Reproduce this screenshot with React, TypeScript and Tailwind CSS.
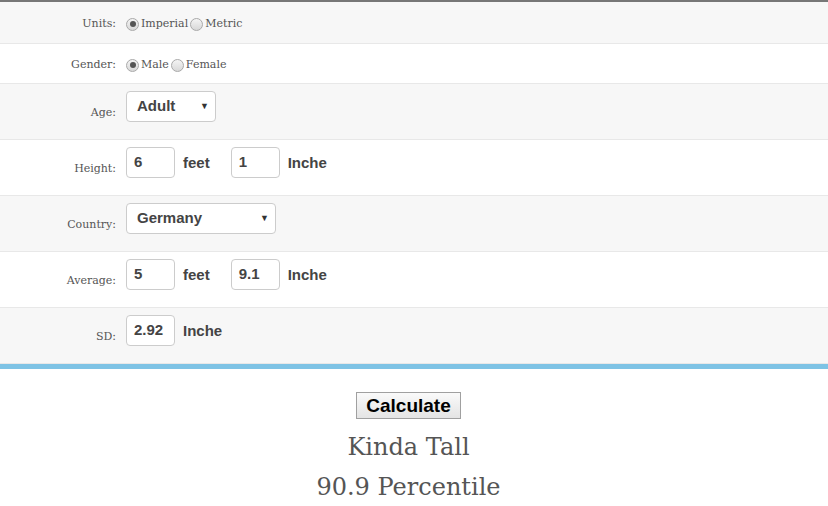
import React from "react";

const serif = { fontFamily: '"DejaVu Serif", "Liberation Serif", serif' };
const sans = { fontFamily: '"Liberation Sans", Arial, sans-serif' };

function Radio({ checked }: { checked?: boolean }) {
  return (
    <span className="inline-flex h-[13px] w-[13px] items-center justify-center rounded-full border border-[#a9a9a9] bg-gradient-to-b from-[#f4f4f4] to-[#d8d8d8]">
      {checked && <span className="block h-[6px] w-[6px] rounded-full bg-[#555]" />}
    </span>
  );
}

function Box({ value }: { value: string }) {
  return (
    <div
      className="flex h-[31px] w-[49px] items-center rounded-[4px] border border-[#cccccc] bg-white pl-[7px] text-[15px] font-bold text-[#444]"
      style={sans}
    >
      {value}
    </div>
  );
}

function Select({ value, w }: { value: string; w: string }) {
  return (
    <div
      className={`flex h-[31px] ${w} items-center justify-between rounded-[4px] border border-[#cccccc] bg-white pl-[10px] pr-[6px] text-[15px] font-bold text-[#444]`}
      style={sans}
    >
      <span>{value}</span>
      <span className="text-[9px] text-[#333]">▼</span>
    </div>
  );
}

function Unit({ children }: { children: React.ReactNode }) {
  return (
    <span className="text-[15px] font-bold text-[#444]" style={sans}>
      {children}
    </span>
  );
}

function RadioRow({ label, bg, h, opts }: { label: string; bg: string; h: string; opts: [string, boolean][] }) {
  return (
    <div className={`flex ${h} items-center border-b border-[#e8e8e8] pt-[3px] ${bg}`}>
      <div className="w-[116px] text-right text-[11px] text-[#555]" style={serif}>
        {label}
      </div>
      <div className="ml-[10px] flex items-center text-[11px] text-[#555]" style={serif}>
        {opts.map(([t, c], i) => (
          <span key={i} className="mr-[2px] flex items-center gap-[2px]">
            <Radio checked={c} />
            <span>{t}</span>
          </span>
        ))}
      </div>
    </div>
  );
}

function InputRow({ label, bg, children }: { label: string; bg: string; children: React.ReactNode }) {
  return (
    <div className={`flex h-[56px] border-b border-[#e8e8e8] ${bg}`}>
      <div className="w-[116px] pt-[22px] text-right text-[11px] leading-[14px] text-[#555]" style={serif}>
        {label}
      </div>
      <div className="ml-[10px] mt-[7px] flex h-[31px] items-center">{children}</div>
    </div>
  );
}

export default function App() {
  return (
    <div className="w-[828px] h-[506px] bg-white overflow-hidden">
      <div className="border-t-2 border-[#777]">
        <RadioRow label="Units:" h="h-[42px]" bg="bg-[#f7f7f7]" opts={[["Imperial", true], ["Metric", false]]} />
        <RadioRow label="Gender:" h="h-[40px]" bg="bg-white" opts={[["Male", true], ["Female", false]]} />
        <InputRow label="Age:" bg="bg-[#f7f7f7]">
          <Select value="Adult" w="w-[90px]" />
        </InputRow>
        <InputRow label="Height:" bg="bg-white">
          <Box value="6" />
          <span className="ml-[8px] mr-[21px]"><Unit>feet</Unit></span>
          <Box value="1" />
          <span className="ml-[8px]"><Unit>Inche</Unit></span>
        </InputRow>
        <InputRow label="Country:" bg="bg-[#f7f7f7]">
          <Select value="Germany" w="w-[150px]" />
        </InputRow>
        <InputRow label="Average:" bg="bg-white">
          <Box value="5" />
          <span className="ml-[8px] mr-[21px]"><Unit>feet</Unit></span>
          <Box value="9.1" />
          <span className="ml-[8px]"><Unit>Inche</Unit></span>
        </InputRow>
        <InputRow label="SD:" bg="bg-[#f7f7f7]">
          <Box value="2.92" />
          <span className="ml-[8px]"><Unit>Inche</Unit></span>
        </InputRow>
        <div className="h-[5px] bg-[#7ec3e5]" />
      </div>
      <div className="flex flex-col items-center pt-[23px] pr-[11px]">
        <button
          className="h-[27px] w-[105px] border border-[#a0a0a0] bg-gradient-to-b from-[#fafafa] to-[#e4e4e4] text-[19px] font-bold leading-none text-black"
          style={sans}
        >
          Calculate
        </button>
        <div className="mt-[8px] text-[24px] leading-[40px] text-[#555]" style={serif}>
          Kinda Tall
        </div>
        <div className="text-[24px] leading-[40px] text-[#555]" style={serif}>
          90.9 Percentile
        </div>
      </div>
    </div>
  );
}
